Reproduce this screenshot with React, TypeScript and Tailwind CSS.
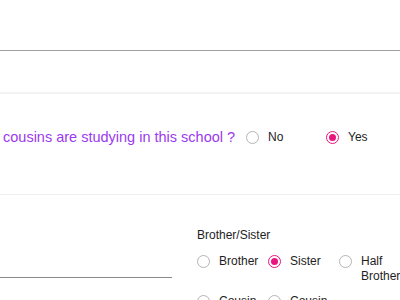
import type { ReactNode } from "react";

function Radio({ checked = false }: { checked?: boolean }) {
  if (checked) {
    return (
      <span className="mt-px flex h-[13px] w-[13px] shrink-0 items-center justify-center rounded-full border border-[#e8157f] bg-white">
        <span className="h-[7px] w-[7px] rounded-full bg-[#e8157f]" />
      </span>
    );
  }
  return <span className="mt-px h-[13px] w-[13px] shrink-0 rounded-full border border-[#b4b4b4] bg-white" />;
}

function Option({ label, checked, width = "w-[71px]" }: { label: ReactNode; checked?: boolean; width?: string }) {
  return (
    <label className={`flex items-start gap-[9px] ${width} shrink-0`}>
      <Radio checked={checked} />
      <span className="text-[12px] leading-[15px] text-[#1e1e1e]">{label}</span>
    </label>
  );
}

export default function App() {
  return (
    <div className="h-[300px] w-[400px] overflow-hidden bg-white font-['Liberation_Sans',Arial,sans-serif]">
      <div className="h-[50px]" />
      <div className="h-[42px] border-t border-[#a0a0a0]" />

      <div className="h-[102px] border-t-2 border-[#f3f3f3] pt-[33px]">
        <div className="flex items-center">
          <div className="w-[246px] shrink-0 whitespace-nowrap pl-[3px] text-[14.5px] leading-[20px] text-[#9b3aee]">
            cousins are studying in this school ?
          </div>
          <label className="flex w-[80px] shrink-0 items-center gap-[9px]">
            <Radio />
            <span className="text-[12px] leading-[15px] text-[#1e1e1e]">No</span>
          </label>
          <label className="flex w-[80px] shrink-0 items-center gap-[9px]">
            <Radio checked />
            <span className="text-[12px] leading-[15px] text-[#1e1e1e]">Yes</span>
          </label>
        </div>
      </div>

      <div className="flex gap-[25px] border-t border-[#eeeeee]">
        <div className="mt-[53px] h-[30px] w-[172px] shrink-0 border-b border-[#8a8a8a]" />
        <div className="flex flex-col pt-[33px]">
          <div className="text-[12px] leading-[15px] text-[#1e1e1e]">Brother/Sister</div>
          <div className="mt-[11px] grid w-[213px] grid-cols-[71px_71px_71px] gap-y-[10px]">
            <Option label="Brother" />
            <Option label="Sister" checked />
            <Option label="Half Brother" />
            <Option label="Cousin" />
            <Option label="Cousin" />
          </div>
        </div>
      </div>
    </div>
  );
}
